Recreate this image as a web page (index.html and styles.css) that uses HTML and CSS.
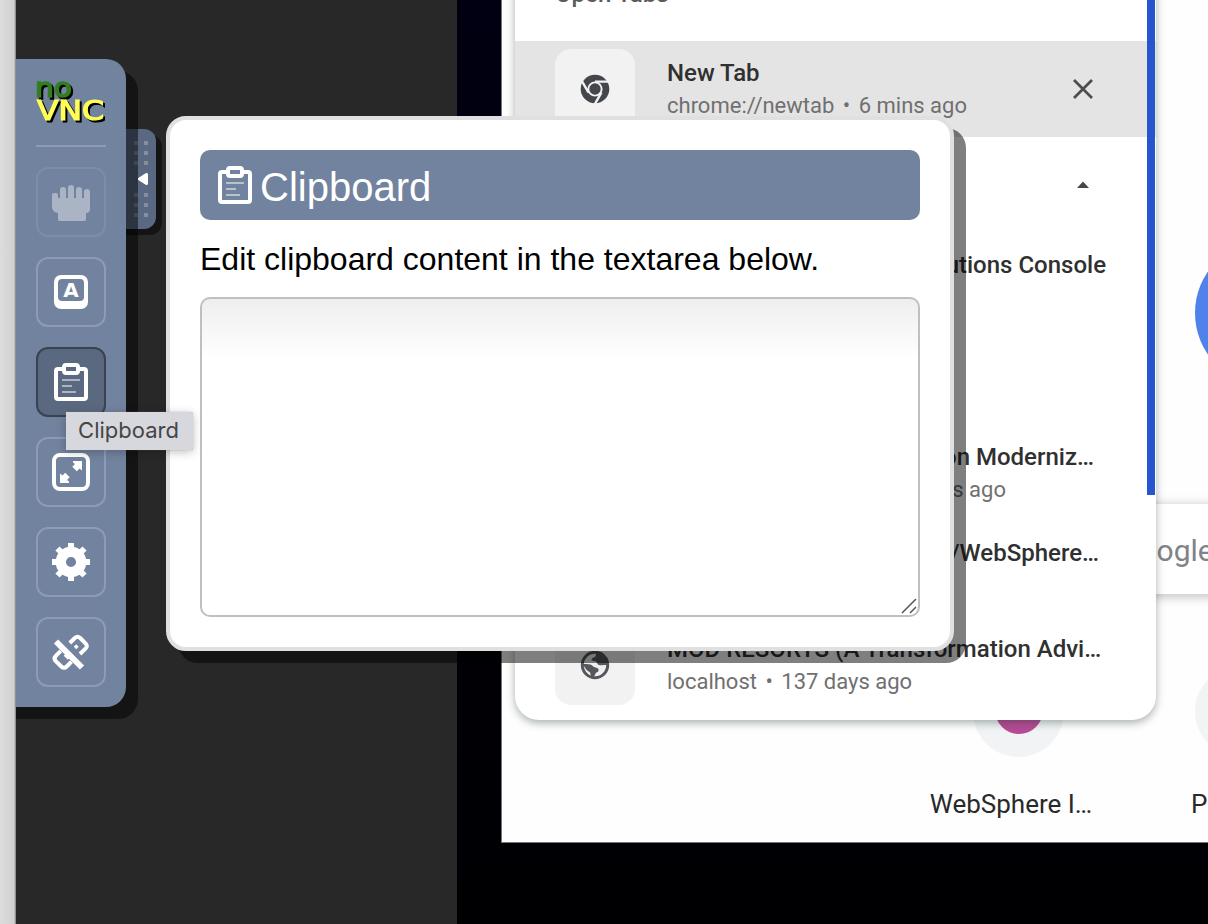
FILE: index.html
```html
<!DOCTYPE html>
<html lang="en">
<head>
<meta charset="utf-8">
<title>noVNC</title>
<link rel="stylesheet" href="styles.css">
</head>
<body>
<div class="app">
  <div class="window-edge"></div>
  <main class="viewer">
    <div class="remote">
      <section class="browser">
        <div class="google-dot"></div>
        <div class="search"><span>Google</span></div>
        <div class="shortcuts">
          <div class="shortcut"><div class="disc"><i class="disc-fill"></i></div><span class="shortcut-name">WebSphere I…</span></div>
          <div class="shortcut shortcut-cut"><div class="disc"></div><span>P</span></div>
        </div>
        <div class="tabs">
          <div class="tabs-heading">Open Tabs</div>
          <div class="tab tab-active">
            <div class="tab-icon">
              <svg width="30" height="30" viewBox="0 0 30 30"><circle cx="15" cy="15" r="14.3" fill="#43474b"/><circle cx="15" cy="15" r="7.6" fill="#f1f1f1"/><path d="M15 7.600H29M8.600 18.700 1.600 6.600M21.400 18.700 14.400 30.800" stroke="#f1f1f1" stroke-width="2.400"/><circle cx="15" cy="15" r="5.700" fill="#43474b"/></svg>
            </div>
            <div class="tab-text"><b>New Tab</b><span>chrome://newtab <i>•</i> 6 mins ago</span></div>
            <svg class="close" width="22" height="22" viewBox="0 0 22 22"><path d="M2 2 20 20M20 2 2 20" stroke="#4c4c4c" stroke-width="2.700"/></svg>
          </div>
          <div class="tab tab-group"><svg width="14" height="8" viewBox="0 0 14 8"><path d="M1 7 7 .500l6 6.500z" fill="#484848"/></svg></div>
          <div class="tab"><div class="tab-icon"></div><div class="tab-text tail tail-console"><b>Solutions Console</b><span>&nbsp;</span></div></div>
          <div class="tab"><div class="tab-icon"></div></div>
          <div class="tab"><div class="tab-icon"></div><div class="tab-text tail tail-modern"><b>Application Moderniz…</b><span class="tail-ago">days ago</span></div></div>
          <div class="tab"><div class="tab-icon"></div><div class="tab-text tail tail-sphere"><b>/WebSphere…</b><span>&nbsp;</span></div></div>
          <div class="tab">
            <div class="tab-icon">
              <svg width="30" height="30" viewBox="0 0 30 30"><circle cx="15" cy="15" r="12.700" fill="#efefef" stroke="#54575b" stroke-width="3"/><path fill="#54575b" d="M16 2c-1 2 .5 3-.5 4.500-1.500 1.500-3.500 1-4 3 0 2 2.500 1.500 4.500 2 1.500 1 1 3 3 3.500 2.500.500 5 0 8.500 0V8L21 2zM2 14c3 0 6-.5 8.500.5 2 1 3 2.500 5 3 2.500.500 3.500 1.500 3 3.500-.5 1.500-2.500 1-3 2.500-.5 2-1 3-3.500 3.500-2-1-1-3-2-4.500C8.500 21 6 20 5 17.500z"/></svg>
            </div>
            <div class="tab-text"><b>MOD RESORTS (A Transformation Advi…</b><span>localhost <i>•</i> 137 days ago</span></div>
          </div>
          <div class="scroll-thumb"></div>
        </div>
      </section>
    </div>
  </main>

  <aside class="control-bar">
    <div class="handle">
      <svg width="30" height="100" viewBox="0 0 30 100"><g fill="#fff" fill-opacity=".25"><path d="M8 12h4v4H8zM18 12h4v4h-4zM8 22h4v4H8zM18 22h4v4h-4zM8 32h4v4H8zM18 32h4v4h-4zM8 64h4v4H8zM18 64h4v4h-4zM8 74h4v4H8zM18 74h4v4h-4zM8 84h4v4H8zM18 84h4v4h-4z"/></g></svg>
    </div>
    <div class="bar">
      <svg class="logo" width="70" height="46" viewBox="0 0 70 46" aria-label="noVNC">
        <text class="no" x="-1" y="17.500" textLength="37" lengthAdjust="spacingAndGlyphs">no</text>
        <text class="vnc" x="1" y="40.500" textLength="67" lengthAdjust="spacingAndGlyphs">VNC</text>
      </svg>
      <hr>
      <button class="btn btn-dim"><svg viewBox="0 0 50 50"><path fill="#fff" d="M6 18a2 2 0 0 1 2-2h2a2 2 0 0 1 2 2v3h2v-8a3 3 0 0 1 6 0v8h2v-10a3 3 0 0 1 6 0v10h2v-8a3 3 0 0 1 6 0v8h2v-6a3 3 0 0 1 6 0v17a4 4 0 0 1-4 4v6a2 2 0 0 1-2 2H14a2 2 0 0 1-2-2v-6q-6-1-6-6z"/></svg></button>
      <button class="btn"><svg viewBox="0 0 50 50"><path fill="#fff" fill-rule="evenodd" d="M15 8h20a7 7 0 0 1 7 7v20a7 7 0 0 1-7 7H15a7 7 0 0 1-7-7V15a7 7 0 0 1 7-7zm1 4a4 4 0 0 0-4 4v14a4 4 0 0 0 4 4h18a4 4 0 0 0 4-4V16a4 4 0 0 0-4-4z"/><text class="key" x="25" y="30.300" text-anchor="middle">A</text></svg></button>
      <button class="btn btn-on"><svg viewBox="0 0 50 50"><g fill="none" stroke="#fff" stroke-width="4"><path d="M18 12h-6a2 2 0 0 0-2 2v26a2 2 0 0 0 2 2h26a2 2 0 0 0 2-2V14a2 2 0 0 0-2-2h-6"/><rect x="18" y="8" width="14" height="8" rx="2"/><path stroke-width="2" stroke-opacity=".5" d="M16 23h18M16 29h10M16 35h14"/></g></svg></button>
      <button class="btn"><svg viewBox="0 0 50 50"><rect x="8" y="8" width="34" height="34" rx="6" fill="none" stroke="#fff" stroke-width="4"/><path fill="#fff" d="M27 14h9v9.500l-2.500-2-2.700 2.800-4.500-4.500 2.700-2.800-2-1.500zM23 36h-9v-9.500l2.500 2 2.700-2.800 4.500 4.500-2.700 2.800 2 1.500z"/></svg></button>
      <button class="btn"><svg viewBox="0 0 50 50"><circle cx="25" cy="25" r="10.200" fill="none" stroke="#fff" stroke-width="10.300"/><path stroke="#fff" stroke-width="6" d="M25 6v6M25 38v6M6 25h6M38 25h6M11.500 11.500l4 4M34.500 34.500l4 4M38.500 11.500l-4 4M15.500 34.500l-4 4"/></svg></button>
      <button class="btn"><svg viewBox="0 0 50 50"><g fill="none" stroke="#fff" stroke-width="4"><path d="M23.800 16l5-5q2.700-2.500 5.400 0l5.300 5.300q2.700 2.700 0 5.400l-5.500 5.300"/><path d="M14.800 23.800l-5 5q-2.500 2.700 0 5.400l5.500 5.300q2.700 2.700 5.400 0l4.800-4.800"/><path stroke-width="3.500" d="M29 18.500l2.500 2.500M19 27.500l3 3 2-1.500"/><path stroke-width="6" d="M10 14.500 36 40.500"/></g></svg></button>
    </div>
    <svg class="arrow" width="10" height="12" viewBox="0 0 10 12"><path d="M1.500 6 8.500 1.500v9z" fill="#fff" stroke="#fff" stroke-width="3" stroke-linejoin="round"/></svg>
  </aside>

  <section class="panel">
    <h1><svg viewBox="0 0 50 50"><g fill="none" stroke="#fff" stroke-width="4"><path d="M18 12h-6a2 2 0 0 0-2 2v26a2 2 0 0 0 2 2h26a2 2 0 0 0 2-2V14a2 2 0 0 0-2-2h-6"/><rect x="18" y="8" width="14" height="8" rx="2"/><path stroke-width="2" stroke-opacity=".5" d="M16 23h18M16 29h10M16 35h14"/></g></svg><span>Clipboard</span></h1>
    <p>Edit clipboard content in the textarea below.</p>
    <div class="textarea"><svg width="18" height="18" viewBox="0 0 18 18"><path d="M2 16 16 2M10 16l6-6" stroke="#555" stroke-width="1.500"/></svg></div>
  </section>

  <div class="tooltip">Clipboard</div>
</div>
</body>
</html>
```
FILE: styles.css
```css
* { box-sizing: border-box; }
body { margin: 0; overflow: hidden; font-family: "Liberation Sans", Arial, sans-serif; }
.app { position: relative; display: flex; width: 1208px; height: 924px; overflow: hidden; }
.window-edge { position: relative; z-index: 2; width: 16px; background: linear-gradient(90deg, #dcdcdc, #d0d0d0 14px, #aaa 15px, #777); }
.viewer { flex: 1; display: flex; padding-left: 441px; background: #282828; }
.remote { flex: 1; padding-left: 44px; background: linear-gradient(#000012, #000006 65%, #000003); }

/* Remote browser window */
.browser { position: relative; display: flex; flex-direction: column; width: 707px; height: 843px; overflow: hidden; background: #fefefe; border: solid #777; border-width: 0 0 1px 1px; font-family: Roboto, sans-serif; }
.google-dot { flex: none; width: 146px; height: 146px; margin: 240px 0 0 693px; border-radius: 50%; background: #5082ec; }
.search { flex: none; display: flex; align-items: center; width: 900px; height: 90px; margin: 118px 0 0 20px; padding: 2px 0 0 597px; background: #fff; box-shadow: 0 2px 10px 1px rgba(0,0,0,.24); color: #808388; font-size: 30px; }
.shortcuts { flex: none; display: flex; width: 900px; margin: 72px 0 0 405px; }
.shortcut { flex: none; display: flex; flex-direction: column; align-items: center; width: 223px; gap: 29px; color: #292929; font-size: 26px; line-height: 36px; white-space: nowrap; }
.shortcut-name { margin-right: 15px; }
.shortcut-cut { align-items: flex-start; padding-left: 61px; }
.shortcut-cut .disc { margin-left: 4px; }
.disc { display: flex; align-items: center; justify-content: center; width: 91px; height: 91px; border-radius: 50%; background: #f1f3f5; }
.disc-fill { width: 48px; height: 48px; margin-bottom: 4px; border-radius: 50%; background: #b74b95; }

.tabs { position: absolute; left: 13px; top: -55px; width: 641px; height: 775px; border-radius: 24px; background: #fff; box-shadow: 0 3px 9px rgba(30,50,45,.38); }
.tabs-heading { display: flex; align-items: center; height: 96px; padding: 1px 0 0 40px; color: #5b5b5b; font-size: 24px; font-weight: 500; }
.tab { display: flex; align-items: center; height: 96px; padding-left: 40px; }
.tab-active { background: #e4e4e4; }
.tab-icon { flex: none; display: flex; align-items: center; justify-content: center; width: 80px; height: 80px; border-radius: 16px; background: #f2f2f2; }
.tab-text { display: flex; flex-direction: column; flex: none; margin-left: 32px; font-size: 22px; line-height: 33px; white-space: nowrap; color: #707070; }
.tab-text i { margin: 0 3px; font-style: normal; }
.tab-text b { padding-top: 1px; font-size: 24px; font-weight: 500; line-height: 32px; color: #303030; }
.tail { align-items: flex-end; }
.tail-console { width: 439px; }
.tail-modern { width: 427px; }
.tail-sphere { width: 432px; }
.tail-ago { margin-right: 88px; }
.close { margin-left: auto; margin-right: 62px; }
.tab-group { padding: 0 0 1px 561px; }
.scroll-thumb { position: absolute; right: 1px; top: 0; width: 8px; height: 550px; background: #2556cb; }

/* Control bar: extends under the window edge so its shadow is clipped there */
.control-bar { position: absolute; left: 16px; top: 59px; width: 110px; }
.bar { position: relative; display: flex; flex-direction: column; gap: 20px; height: 648px; margin-left: -16px; padding: 20px 20px 20px 36px; border-radius: 0 20px 20px 0; background: #72839f; box-shadow: 12px 12px 0 rgba(0,0,0,.5); }
.handle { position: absolute; left: 90px; top: 70px; width: 50px; height: 100px; padding-left: 20px; border-radius: 0 12px 12px 0; background: #5a6882; box-shadow: 6px 6px 0 rgba(0,0,0,.5); }
.handle svg { display: block; }
.arrow { position: absolute; left: 122px; top: 114px; }
.logo { display: block; flex: none; overflow: visible; }
.logo text { font-family: "DejaVu Sans", sans-serif; filter: drop-shadow(2px 2px 0 #000); }
.no { font-size: 27px; fill: #347d20; stroke: #347d20; stroke-width: 1.600px; }
.vnc { font-size: 26px; fill: #ffff54; stroke: #ffff54; stroke-width: 1.200px; }
hr { flex: none; width: 70px; height: 2px; margin: 0; border: 0; background: rgba(255,255,255,.2); }
.btn { flex: none; width: 70px; height: 70px; padding: 8px; border: 2px solid rgba(255,255,255,.2); border-radius: 12px; background: none; }
.btn svg { display: block; width: 50px; height: 50px; }
.btn-dim { opacity: .4; }
.btn-on { background: #5b6980; border-color: #394250; }
.key { font: bold 20px "DejaVu Sans", sans-serif; fill: #fff; }

/* Clipboard panel */
.panel { position: absolute; left: 166px; top: 116px; width: 788px; height: 535px; padding: 30px; border: 4px solid #e0e0e0; border-radius: 20px; background: #fff; box-shadow: 12px 12px 0 rgba(0,0,0,.5); }
.panel h1 { display: flex; align-items: center; height: 70px; margin: 0; padding: 0 10px; border-radius: 10px; background: #72839f; color: #fff; font-size: 40px; font-weight: 400; }
.panel h1 svg { width: 50px; height: 50px; }
.panel h1 span { padding-top: 4px; }
.panel p { height: 77px; margin: 0; font-size: 32px; line-height: 78px; white-space: nowrap; }
.textarea { display: flex; align-items: flex-end; justify-content: flex-end; height: 320px; border: 2px solid #c0c0c0; border-radius: 10px; background: linear-gradient(#eee, #fff 60px); }

.tooltip { position: absolute; left: 66px; top: 412px; width: 127px; height: 38px; padding-right: 2px; background: #d6d8dd; box-shadow: 0 2px 10px rgba(0,0,0,.25), 0 0 1px #999; color: #454545; font: 22px/37px Inter, sans-serif; text-align: center; border-radius: 0 2px 2px 0; }
```
